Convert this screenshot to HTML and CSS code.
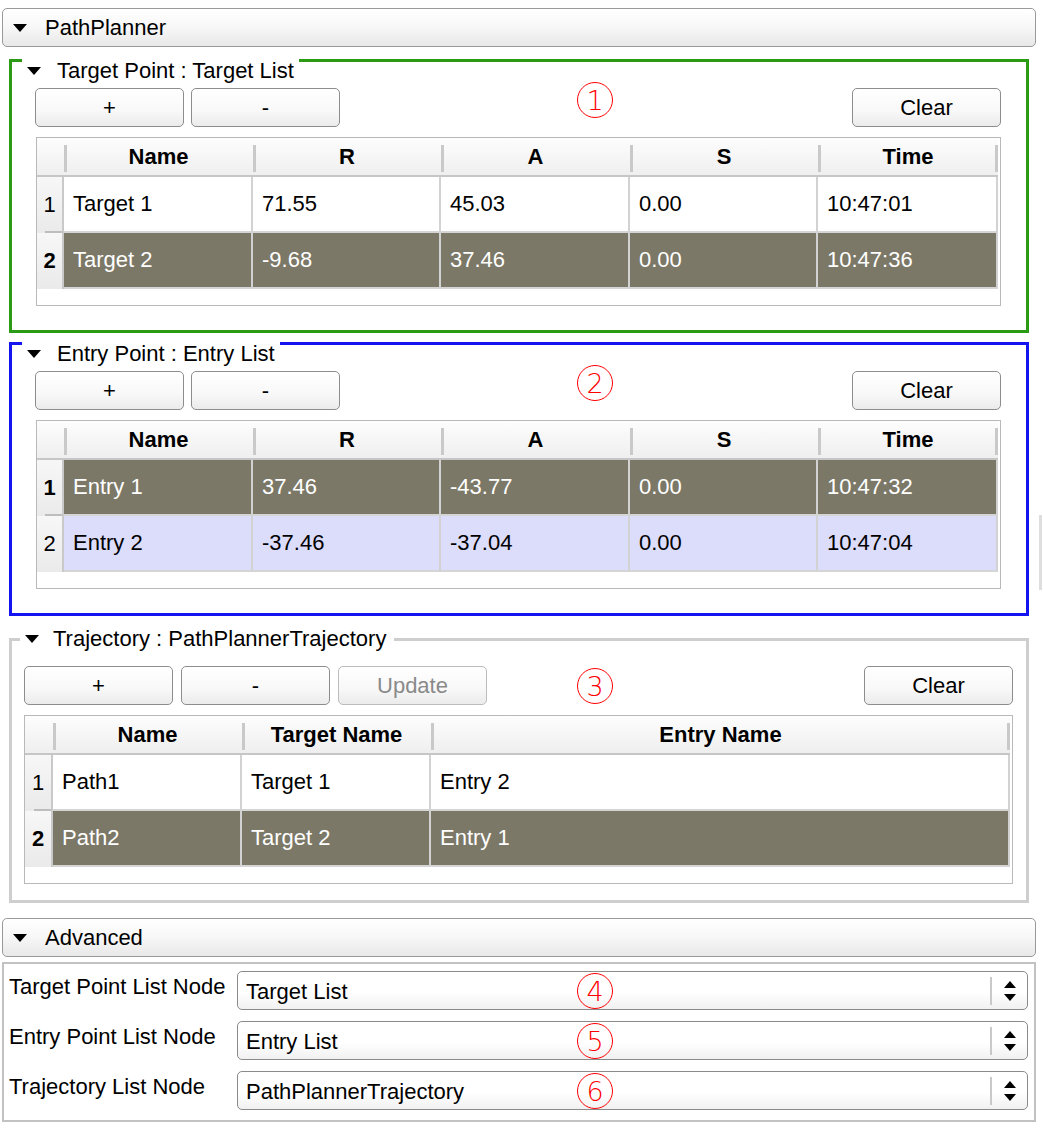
FILE: index.html
```html
<!DOCTYPE html>
<html lang="en">
<head>
    <meta charset="UTF-8">
    <title>PathPlanner</title>
    <link rel="stylesheet" href="styles.css">
</head>
<body>

<div class="page">

    <!-- PathPlanner 折叠栏 -->
    <div class="bar">
        <svg class="tri" width="14" height="8" viewBox="0 0 14 8"><path d="M0 0H14L7 8Z"/></svg>
        <span>PathPlanner</span>
    </div>

    <!-- Target Point -->
    <section class="group group-target">
        <div class="group-title">
            <svg class="tri" width="14" height="8" viewBox="0 0 14 8"><path d="M0 0H14L7 8Z"/></svg>
            <span>Target Point : Target List</span>
        </div>
        <div class="toolbar">
            <button class="btn">+</button>
            <button class="btn">-</button>
            <button class="btn push">Clear</button>
        </div>
        <div class="grid grid-points">
            <div class="row head">
                <div class="cell rh"></div>
                <div class="cell">Name</div>
                <div class="cell">R</div>
                <div class="cell">A</div>
                <div class="cell">S</div>
                <div class="cell">Time</div>
            </div>
            <div class="row">
                <div class="cell rh">1</div>
                <div class="cell">Target 1</div>
                <div class="cell">71.55</div>
                <div class="cell">45.03</div>
                <div class="cell">0.00</div>
                <div class="cell">10:47:01</div>
            </div>
            <div class="row sel">
                <div class="cell rh">2</div>
                <div class="cell">Target 2</div>
                <div class="cell">-9.68</div>
                <div class="cell">37.46</div>
                <div class="cell">0.00</div>
                <div class="cell">10:47:36</div>
            </div>
        </div>
        <span class="mark mark-group">1</span>
    </section>

    <!-- Entry Point -->
    <section class="group group-entry">
        <div class="group-title">
            <svg class="tri" width="14" height="8" viewBox="0 0 14 8"><path d="M0 0H14L7 8Z"/></svg>
            <span>Entry Point : Entry List</span>
        </div>
        <div class="toolbar">
            <button class="btn">+</button>
            <button class="btn">-</button>
            <button class="btn push">Clear</button>
        </div>
        <div class="grid grid-points">
            <div class="row head">
                <div class="cell rh"></div>
                <div class="cell">Name</div>
                <div class="cell">R</div>
                <div class="cell">A</div>
                <div class="cell">S</div>
                <div class="cell">Time</div>
            </div>
            <div class="row sel">
                <div class="cell rh">1</div>
                <div class="cell">Entry 1</div>
                <div class="cell">37.46</div>
                <div class="cell">-43.77</div>
                <div class="cell">0.00</div>
                <div class="cell">10:47:32</div>
            </div>
            <div class="row alt">
                <div class="cell rh">2</div>
                <div class="cell">Entry 2</div>
                <div class="cell">-37.46</div>
                <div class="cell">-37.04</div>
                <div class="cell">0.00</div>
                <div class="cell">10:47:04</div>
            </div>
        </div>
        <span class="mark mark-group">2</span>
    </section>

    <!-- Trajectory -->
    <section class="group group-traj">
        <div class="group-title">
            <svg class="tri" width="14" height="8" viewBox="0 0 14 8"><path d="M0 0H14L7 8Z"/></svg>
            <span>Trajectory : PathPlannerTrajectory</span>
        </div>
        <div class="toolbar">
            <button class="btn">+</button>
            <button class="btn">-</button>
            <button class="btn" disabled>Update</button>
            <button class="btn push">Clear</button>
        </div>
        <div class="grid grid-traj">
            <div class="row head">
                <div class="cell rh"></div>
                <div class="cell">Name</div>
                <div class="cell">Target Name</div>
                <div class="cell">Entry Name</div>
            </div>
            <div class="row">
                <div class="cell rh">1</div>
                <div class="cell">Path1</div>
                <div class="cell">Target 1</div>
                <div class="cell">Entry 2</div>
            </div>
            <div class="row sel">
                <div class="cell rh">2</div>
                <div class="cell">Path2</div>
                <div class="cell">Target 2</div>
                <div class="cell">Entry 1</div>
            </div>
        </div>
        <span class="mark mark-traj">3</span>
    </section>

    <!-- Advanced 折叠栏 -->
    <div class="bar bar-advanced">
        <svg class="tri" width="14" height="8" viewBox="0 0 14 8"><path d="M0 0H14L7 8Z"/></svg>
        <span>Advanced</span>
    </div>

    <div class="advanced">
        <div class="adv-row">
            <label class="adv-label">Target Point List Node</label>
            <div class="combo">
                <span class="combo-value">Target List</span>
                <span class="combo-sep"></span>
                <span class="combo-arrows">
                    <svg width="12" height="20" viewBox="0 0 12 20"><path d="M6 0L12 7H0Z"/><path d="M0 13H12L6 20Z"/></svg>
                </span>
                <span class="mark mark-combo">4</span>
            </div>
        </div>
        <div class="adv-row">
            <label class="adv-label">Entry Point List Node</label>
            <div class="combo">
                <span class="combo-value">Entry List</span>
                <span class="combo-sep"></span>
                <span class="combo-arrows">
                    <svg width="12" height="20" viewBox="0 0 12 20"><path d="M6 0L12 7H0Z"/><path d="M0 13H12L6 20Z"/></svg>
                </span>
                <span class="mark mark-combo">5</span>
            </div>
        </div>
        <div class="adv-row">
            <label class="adv-label">Trajectory List Node</label>
            <div class="combo">
                <span class="combo-value">PathPlannerTrajectory</span>
                <span class="combo-sep"></span>
                <span class="combo-arrows">
                    <svg width="12" height="20" viewBox="0 0 12 20"><path d="M6 0L12 7H0Z"/><path d="M0 13H12L6 20Z"/></svg>
                </span>
                <span class="mark mark-combo">6</span>
            </div>
        </div>
    </div>

    <div class="scroll-hint"></div>
</div>

</body>
</html>
```

FILE: styles.css
```css
body {
    margin: 0;
    background-color: #fff;
    font-family: "Liberation Sans", Arial, sans-serif;
    font-size: 22px;
    color: #000;
}

.page {
    position: relative;
    width: 1043px;
    padding-top: 8px;
}

.tri {
    flex: none;
    fill: #000;
}

/* 折叠栏 */
.bar {
    display: flex;
    align-items: center;
    height: 39px;
    box-sizing: border-box;
    margin: 0 7px 0 2px;
    padding-left: 10px;
    border: 1px solid #999;
    border-radius: 5px;
    background: linear-gradient(#ffffff, #f7f7f7 50%, #e8e8e8);
}

.bar .tri {
    margin-right: 18px;
}

.bar-advanced {
    margin-top: 15px;
}

/* 分组框 */
.group {
    position: relative;
    margin: 12px 14px 0 9px;
    border: 3px solid;
    padding: 0 25px 24px 23px;
}

.group-target {
    border-color: #2b9b15;
}

.group-entry {
    margin-top: 9px;
    border-color: #1414f0;
}

.group-traj {
    margin-top: 22px;
    border-color: #cecece;
    padding: 0 13px 16px 12px;
}

.group-title {
    display: flex;
    align-items: center;
    width: fit-content;
    height: 24px;
    margin: -3px 0 0 -13px;
    padding: 0 5px;
    background-color: #fff;
}

.group-title .tri {
    margin-right: 16px;
}

.group-traj .group-title {
    margin: -14px 0 0 -4px;
    padding: 0 8px 0 5px;
}

.group-traj .group-title .tri {
    margin-right: 14px;
}

/* 按钮 */
.toolbar {
    display: flex;
    gap: 7px;
    margin-top: 5px;
}

.group-traj .toolbar {
    gap: 8px;
    margin-top: 15px;
}

.toolbar .push {
    margin-left: auto;
}

.btn {
    width: 149px;
    height: 39px;
    box-sizing: border-box;
    padding: 0;
    border: 1px solid #8d8d8d;
    border-radius: 5px;
    background: linear-gradient(#ffffff, #f8f8f8 60%, #ebebeb);
    font: inherit;
    color: #000;
}

.btn:disabled {
    color: #8a8a8a;
    border-color: #bcbcbc;
}

/* 表格 */
.grid {
    width: max-content;
    margin: 10px 0 0 1px;
    padding: 0 2px 16px 0;
    border: 1px solid #b9b9b9;
    background-color: #fff;
}

.grid-traj {
    margin-left: 0;
}

.row {
    display: grid;
    grid-template-columns: 27px 189px 188px 189px 188px 180px;
    height: 56px;
}

.grid-traj .row {
    grid-template-columns: 28px 189px 189px 579px;
}

.row.head {
    height: 39px;
    background: linear-gradient(#fdfdfd, #eeeeee);
}

.cell {
    display: flex;
    align-items: center;
    box-sizing: border-box;
    padding-left: 9px;
    border-right: 2px solid #d2d2d2;
    border-bottom: 2px solid #d5d5d5;
    white-space: nowrap;
    overflow: hidden;
}

.head .cell {
    justify-content: center;
    padding: 0;
    font-weight: bold;
    border-right: none;
    border-bottom: 2px solid #c6c6c6;
    background: linear-gradient(#c9c9c9, #c9c9c9) left 0 top 7px / 3px 27px no-repeat;
}

.head .cell:last-child {
    background:
        linear-gradient(#c9c9c9, #c9c9c9) left 0 top 7px / 3px 27px no-repeat,
        linear-gradient(#c9c9c9, #c9c9c9) right 0 top 7px / 3px 27px no-repeat;
}

.head .cell.rh {
    background: none;
}

.rh {
    justify-content: center;
    padding: 0;
    border-right: 2px solid #c9c9c9;
    border-bottom: none;
    background: linear-gradient(#f7f7f7, #eaeaea);
}

.row:not(.head):not(:last-child) .rh {
    background:
        linear-gradient(#bdbdbd, #bdbdbd) right 0 bottom 0 / 17px 2px no-repeat,
        linear-gradient(#f7f7f7, #eaeaea);
}

.row.sel .cell:not(.rh) {
    background-color: #7c7867;
    color: #fff;
}

.row.sel .rh {
    font-weight: bold;
}

.row.alt .cell:not(.rh) {
    background-color: #dcdcfb;
}

/* 标注圆圈 */
.mark {
    position: absolute;
    left: 565px;
    display: flex;
    align-items: center;
    justify-content: center;
    width: 36px;
    height: 36px;
    box-sizing: border-box;
    border: 1.5px solid #f00;
    border-radius: 50%;
    color: #f00;
    font-family: "DejaVu Sans", sans-serif;
    font-weight: 200;
    font-size: 27px;
    line-height: 1;
}

.mark-group {
    top: 20px;
}

.mark-traj {
    top: 27px;
}

.mark-combo {
    left: 339px;
    top: 1px;
}

/* Advanced */
.advanced {
    margin: 5px 7px 0 2px;
    padding: 7px 6px 10px 5px;
    border: 2px solid #c2c2c2;
    display: flex;
    flex-direction: column;
    gap: 11px;
}

.adv-row {
    display: flex;
    align-items: center;
}

.adv-label {
    width: 228px;
    flex: none;
    margin-bottom: 8px;
    white-space: nowrap;
}

.combo {
    position: relative;
    flex: 1;
    display: flex;
    align-items: center;
    height: 39px;
    box-sizing: border-box;
    border: 1px solid #8a8a8a;
    border-radius: 5px;
    background: linear-gradient(#ffffff, #ffffff 55%, #f1f1f1);
}

.combo-value {
    flex: 1;
    padding-left: 8px;
    margin-top: 2px;
}

.combo-sep {
    width: 2px;
    height: 28px;
    background-color: #c9c9c9;
}

.combo-arrows {
    display: flex;
    justify-content: center;
    width: 35px;
}

.scroll-hint {
    position: absolute;
    left: 1039px;
    top: 515px;
    width: 3px;
    height: 75px;
    background-color: #dedede;
}
```
